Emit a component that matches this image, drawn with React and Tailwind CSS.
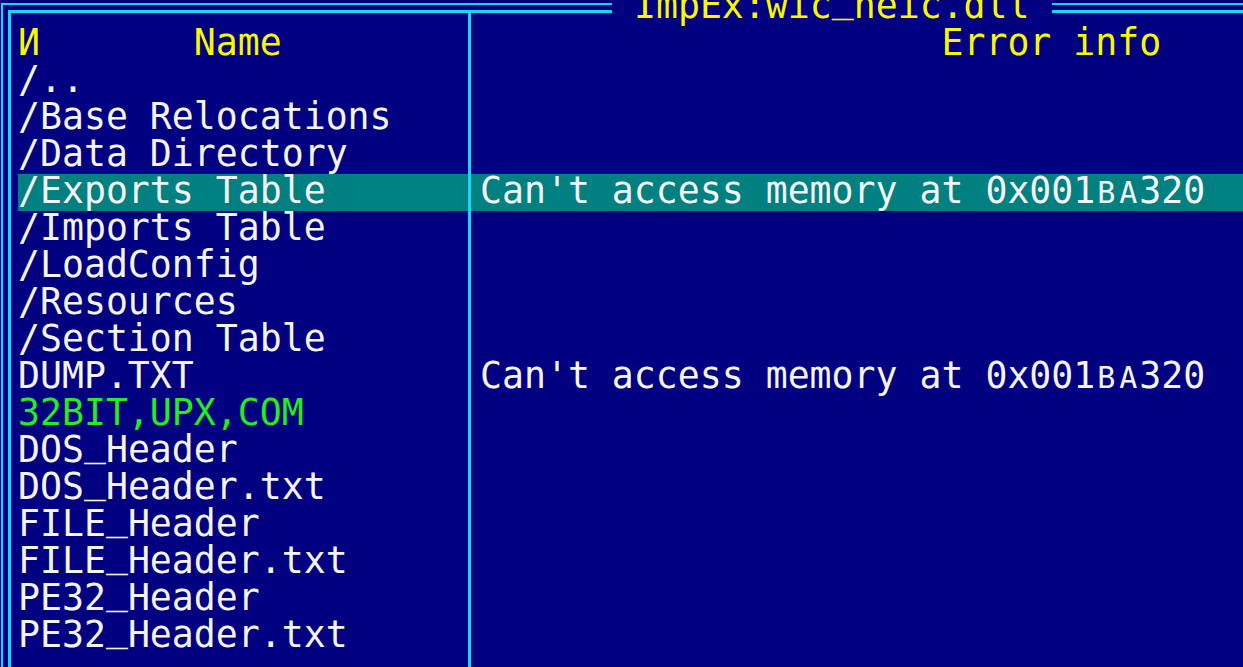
const frame = "border-[#18d6f4]";

const rows = [
  { name: "/.." },
  { name: "/Base Relocations" },
  { name: "/Data Directory" },
  { name: "/Exports Table", info: true, active: true },
  { name: "/Imports Table" },
  { name: "/LoadConfig" },
  { name: "/Resources" },
  { name: "/Section Table" },
  { name: "DUMP.TXT", info: true },
  { name: "32BIT,UPX,COM", green: true },
  { name: "DOS_Header" },
  { name: "DOS_Header.txt" },
  { name: "FILE_Header" },
  { name: "FILE_Header.txt" },
  { name: "PE32_Header" },
  { name: "PE32_Header.txt" },
];

// the console font draws "_" on the baseline, so lift it a little
const withUnderscore = (text) =>
  text.split("_").flatMap((part, i) =>
    i === 0
      ? [part]
      : [
          <span key={i} className="inline-block -translate-y-[7px]">
            _
          </span>,
          part,
        ]
  );

const ErrorText = () => (
  <>
    Can't access memory at 0x001
    <span className="inline-block w-[22px] text-center text-[30px] leading-none">B</span>
    <span className="inline-block w-[22px] text-center text-[30px] leading-none">A</span>
    320
  </>
);

const App = () => {
  return (
    <div className="relative h-[667px] w-[1243px] overflow-hidden bg-[#000080] pl-px pt-[3px] font-['DejaVu_Sans_Mono',monospace] text-[36.5px] leading-[33px] text-[#f4f4f4]">
      <div className={`h-full border-l-2 border-t-2 pl-[5px] pt-[5px] ${frame}`}>
        <div className={`flex h-full border-l-[3px] border-t-[3px] ${frame}`}>
          {/* name column */}
          <div className="w-[457px] shrink-0 pl-[7px] pt-[13px]">
            <div className="h-[37px] whitespace-pre text-[#f8f800]">
              {"И       Name"}
            </div>
            {rows.map((r) => (
              <div
                key={r.name}
                className={`h-[37px] whitespace-pre ${
                  r.active ? "bg-[#008080]" : ""
                } ${r.green ? "text-[#22ee22]" : ""}`}
              >
                {withUnderscore(r.name)}
              </div>
            ))}
          </div>

          {/* error info column */}
          <div className={`min-w-0 flex-1 border-l-[3px] pt-[13px] ${frame}`}>
            <div className="h-[37px] whitespace-pre pl-[9px] text-[#f8f800]">
              {"                     Error info"}
            </div>
            {rows.map((r) => (
              <div
                key={r.name}
                className={`h-[37px] whitespace-pre pl-[9px] ${
                  r.active ? "bg-[#008080]" : ""
                }`}
              >
                {r.info && <ErrorText />}
              </div>
            ))}
          </div>
        </div>
      </div>

      {/* panel title sits over the top frame */}
      <div className="absolute left-[612px] top-[-11px] whitespace-pre bg-[#000080] text-[#f8f800]">
        {" ImpEx:wic"}
        <span className="inline-block -translate-y-[7px]">_</span>
        {"neic.dll "}
      </div>
    </div>
  );
};

export default App;
